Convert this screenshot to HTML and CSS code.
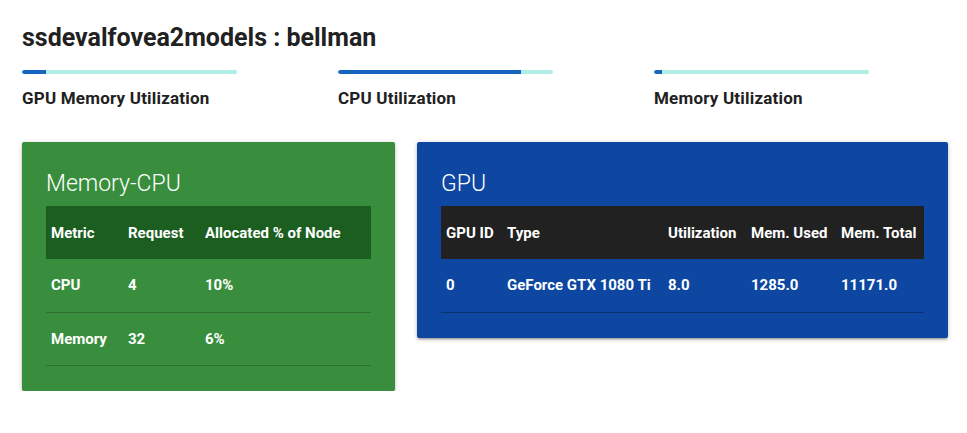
FILE: index.html
```html
<!DOCTYPE html>
<html>
<head>
<meta charset="utf-8">
<link rel="stylesheet" href="styles.css">
</head>
<body>
<div class="page">
  <h1 class="title">ssdevalfovea2models : bellman</h1>
  <div class="stats">
    <div class="stat">
      <div class="bar"><div class="fill" style="width: 11%"></div></div>
      <div class="label">GPU Memory Utilization</div>
    </div>
    <div class="stat">
      <div class="bar"><div class="fill" style="width: 85%"></div></div>
      <div class="label">CPU Utilization</div>
    </div>
    <div class="stat">
      <div class="bar"><div class="fill" style="width: 3.5%"></div></div>
      <div class="label">Memory Utilization</div>
    </div>
  </div>
  <div class="cards">
    <div class="card card-green">
      <div class="card-title">Memory-CPU</div>
      <table class="tbl tbl-green">
        <colgroup><col class="c77"><col class="c77"><col></colgroup>
        <thead><tr><th>Metric</th><th>Request</th><th>Allocated % of Node</th></tr></thead>
        <tbody>
          <tr><td>CPU</td><td>4</td><td>10%</td></tr>
          <tr><td>Memory</td><td>32</td><td>6%</td></tr>
        </tbody>
      </table>
    </div>
    <div class="card card-blue">
      <div class="card-title">GPU</div>
      <table class="tbl tbl-blue">
        <colgroup><col class="c61"><col class="c161"><col class="c83"><col class="c90"><col></colgroup>
        <thead><tr><th>GPU ID</th><th>Type</th><th>Utilization</th><th>Mem. Used</th><th>Mem. Total</th></tr></thead>
        <tbody>
          <tr><td>0</td><td>GeForce GTX 1080 Ti</td><td>8.0</td><td>1285.0</td><td>11171.0</td></tr>
        </tbody>
      </table>
    </div>
  </div>
</div>
</body>
</html>
```

FILE: styles.css
```css
* { box-sizing: border-box; }
html, body { margin: 0; padding: 0; background: #ffffff; }
body { font-family: Roboto, "Liberation Sans", sans-serif; color: #212121; }

.page { padding: 24px 22px 0 22px; }

.title {
  margin: 0;
  font-size: 25px;
  line-height: 28px;
  font-weight: 700;
  color: #212121;
}

.stats {
  display: grid;
  grid-template-columns: 316px 316px 1fr;
  margin-top: 18px;
}

.bar {
  width: 215px;
  height: 4px;
  border-radius: 2px;
  background: #b2ece6;
  overflow: hidden;
}
.fill { height: 100%; background: #1565c0; border-radius: 2px 0 0 2px; }

.label {
  margin-top: 14px;
  font-size: 17px;
  line-height: 20px;
  font-weight: 700;
  letter-spacing: 0.2px;
  color: #212121;
}

.cards {
  display: flex;
  align-items: flex-start;
  gap: 22px;
  margin-top: 34px;
}

.card {
  padding: 24px 24px 25px 24px;
  border-radius: 2px;
  color: #ffffff;
  box-shadow: 0 2px 2px 0 rgba(0,0,0,.14), 0 3px 1px -2px rgba(0,0,0,.12), 0 1px 5px 0 rgba(0,0,0,.2);
}
.card-green { background: #388e3c; }
.card-blue { background: #0d47a1; }

.card-title {
  margin-top: 4px;
  margin-bottom: 8px;
  font-size: 23px;
  line-height: 28px;
  font-weight: 300;
}

.tbl {
  border-collapse: collapse;
  table-layout: fixed;
  font-size: 15px;
  font-weight: 700;
}
.tbl-green { width: 325px; }
.tbl-blue { width: 483px; }

.c77 { width: 77px; }
.c61 { width: 61px; }
.c161 { width: 161px; }
.c83 { width: 83px; }
.c90 { width: 90px; }

.tbl th {
  height: 53px;
  padding: 0 5px;
  text-align: left;
  font-weight: 700;
  white-space: nowrap;
}
.tbl td {
  height: 53px;
  padding: 0 5px;
  text-align: left;
  white-space: nowrap;
  border-bottom: 1px solid rgba(0,0,0,.2);
}
.tbl-green th { background: #1b5e20; }
.tbl-blue th { background: #212121; }
.tbl-blue td { border-bottom-color: rgba(0,0,0,.3); }
```
